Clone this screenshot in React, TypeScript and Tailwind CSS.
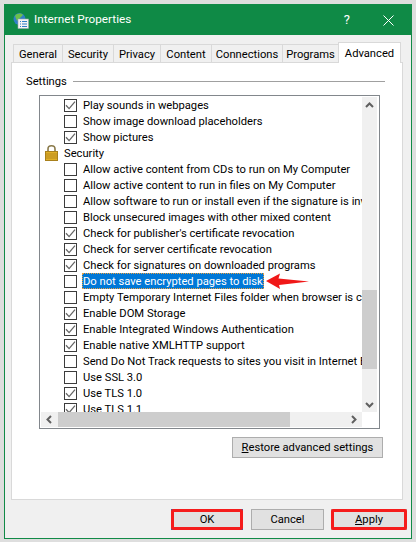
import React from 'react';

const settings = [
  { label: 'Play sounds in webpages', checked: true },
  { label: 'Show image download placeholders', checked: false },
  { label: 'Show pictures', checked: true },
  { label: 'Security', group: true },
  { label: 'Allow active content from CDs to run on My Computer', checked: false },
  { label: 'Allow active content to run in files on My Computer', checked: false },
  { label: 'Allow software to run or install even if the signature is invalid', checked: false },
  { label: 'Block unsecured images with other mixed content', checked: false },
  { label: "Check for publisher's certificate revocation", checked: true },
  { label: 'Check for server certificate revocation', checked: true },
  { label: 'Check for signatures on downloaded programs', checked: true },
  { label: 'Do not save encrypted pages to disk', checked: false, selected: true },
  { label: 'Empty Temporary Internet Files folder when browser is closed', checked: false },
  { label: 'Enable DOM Storage', checked: true },
  { label: 'Enable Integrated Windows Authentication', checked: true },
  { label: 'Enable native XMLHTTP support', checked: true },
  { label: 'Send Do Not Track requests to sites you visit in Internet Explorer', checked: false },
  { label: 'Use SSL 3.0', checked: false },
  { label: 'Use TLS 1.0', checked: true },
  { label: 'Use TLS 1.1', checked: true },
];

const tabs = [
  { label: 'General', w: 'w-[49px]' },
  { label: 'Security', w: 'w-[51px]' },
  { label: 'Privacy', w: 'w-[47px]' },
  { label: 'Content', w: 'w-[51px]' },
  { label: 'Connections', w: 'w-[71px]' },
  { label: 'Programs', w: 'w-[56px]' },
];

function Check({ checked }: { checked?: boolean }) {
  return (
    <span className="w-[13px] h-[13px] shrink-0 border border-[#3c3c3c] bg-white flex items-center justify-center">
      {checked && (
        <svg width="11" height="11" viewBox="0 0 11 11" fill="none">
          <path d="M1 5.2 L4.1 8.6 L10 1.6" stroke="#666" strokeWidth="1.3" />
        </svg>
      )}
    </span>
  );
}

function Lock() {
  return (
    <svg width="13" height="16" viewBox="0 0 13 16" className="shrink-0">
      <path d="M3 7 V4 C3 1.6 4.6 .8 6.5 .8 C8.4 .8 10 1.6 10 4 V7" fill="none" stroke="#8a7a4a" strokeWidth="1.6" />
      <rect x=".5" y="6.5" width="12" height="9" fill="#e0b028" stroke="#a8801c" />
      <path d="M1 9 H12 M1 11 H12 M1 13 H12" stroke="#b88a1e" strokeWidth="1" />
    </svg>
  );
}

function Chevron({ dir }: { dir: 'up' | 'down' | 'left' | 'right' }) {
  const d = {
    up: 'M2 7 L5.5 3.5 L9 7',
    down: 'M2 4 L5.5 7.5 L9 4',
    left: 'M7 2 L3.5 5.5 L7 9',
    right: 'M4 2 L7.5 5.5 L4 9',
  }[dir];
  return (
    <svg width="11" height="11" viewBox="0 0 11 11" fill="none">
      <path d={d} stroke="#606060" strokeWidth="2" />
    </svg>
  );
}

function Row({ item }: { item: (typeof settings)[number] }) {
  if (item.group) {
    return (
      <div className="h-4 shrink-0 flex items-center gap-[6px] pl-[4px]">
        <Lock />
        <span className="pt-[2px]">{item.label}</span>
      </div>
    );
  }
  return (
    <div className="h-4 shrink-0 flex items-center gap-[5px] pl-[23px] relative">
      <Check checked={item.checked} />
      {item.selected ? (
        <span className="h-4 flex items-center pt-[2px] border border-dotted border-[#e8a040] bg-[#0078d7] text-white">{item.label}</span>
      ) : (
        <span className="pt-[2px] border border-transparent">{item.label}</span>
      )}
      {item.selected && (
        <svg width="44" height="18" viewBox="0 0 44 18" className="absolute left-[224px] top-[-1px]">
          <path d="M1 9 L15 1.5 L13.5 6.5 L44 9.5 L14 13 L15 17 Z" fill="#f01818" />
        </svg>
      )}
    </div>
  );
}

function Button({ children, red, blue, className }: { children: React.ReactNode; red?: boolean; blue?: boolean; className: string }) {
  return (
    <button
      type="button"
      className={`h-[21px] pt-[2px] relative bg-[#e1e1e1] border ${blue ? 'border-[#0078d7]' : 'border-[#adadad]'} text-black ${className}`}
    >
      {children}
      {red && <span className="absolute -inset-px border-[3px] border-[#f51c1c] rounded-[2px]" />}
    </button>
  );
}

export default function App() {
  return (
    <div className="w-[416px] h-[542px] pt-[4px] pb-[3px] px-[4px] bg-[#dedede] text-[11.2px] text-black" style={{ fontFamily: 'Roboto, "Noto Sans", sans-serif' }}>
      <div className="h-full flex flex-col border border-[#118a47] bg-[#f0f0f0]">
        {/* Title bar */}
        <div className="h-[30px] shrink-0 bg-[#0f8a46] flex items-center text-white">
          <svg width="16" height="17" viewBox="0 0 16 17" className="ml-[8px] shrink-0">
            <circle cx="6.5" cy="7" r="6" fill="#2f7fc8" />
            <path d="M2 4 C4 1 8 1 10 3 L7 6 L4 9 Z" fill="#6cc04a" />
            <rect x="5" y="7" width="10.5" height="9.5" fill="#f4f4f4" stroke="#9aa6b0" strokeWidth=".6" />
            <path d="M7 9.5 H8 M9 9.5 H14 M7 12 H8 M9 12 H14 M7 14.5 H8 M9 14.5 H14" stroke="#2f7fc8" strokeWidth="1" />
          </svg>
          <span className="ml-[5px] text-[11.75px]">Internet Properties</span>
          <span className="ml-auto text-[13px] mr-[33px]">?</span>
          <svg width="11" height="11" viewBox="0 0 11 11" className="mr-[17px] shrink-0" fill="none">
            <path d="M.5 .5 L10.5 10.5 M10.5 .5 L.5 10.5" stroke="#fff" strokeWidth="1" />
          </svg>
        </div>

        {/* Tabs */}
        <div className="flex items-start pl-[8px] mt-[7px] h-[21px] -mb-px shrink-0 relative z-10">
          {tabs.map((t) => (
            <div key={t.label} className={`${t.w} h-[19px] mt-[2px] pt-[2px] border border-b-0 border-r-0 border-[#d9d9d9] flex items-center justify-center`}>
              {t.label}
            </div>
          ))}
          <div className="w-[63px] h-[21px] pt-[2px] border border-b-0 border-[#d9d9d9] bg-white flex items-center justify-center">Advanced</div>
        </div>

        {/* Panel */}
        <div className="h-[438px] shrink-0 ml-[6px] mr-[8px] border border-[#d9d9d9] bg-white pt-[11px] pl-[14px] pr-[17px] flex flex-col">
          <div className="flex items-center gap-[6px] h-[14px]">
            <span className="pt-[2px]">Settings</span>
            <div className="flex-1 h-px bg-[#a0a0a0]" />
          </div>

          {/* List box */}
          <div className="mt-[7px] ml-[13px] mr-[5px] h-[334px] border border-[#82878c] p-px pt-px pr-[2px] flex flex-col bg-white">
            <div className="flex h-[315px] shrink-0">
              <div className="flex-1 min-w-0 overflow-hidden flex flex-col whitespace-nowrap">
                {settings.map((s) => (
                  <Row key={s.label} item={s} />
                ))}
              </div>
              <div className="w-[15px] shrink-0 bg-[#f0f0f0] flex flex-col">
                <div className="h-[16px] flex items-center justify-center"><Chevron dir="up" /></div>
                <div className="h-[177px]" />
                <div className="h-[79px] bg-[#cdcdcd]" />
                <div className="flex-1" />
                <div className="h-[16px] flex items-center justify-center"><Chevron dir="down" /></div>
              </div>
            </div>
            <div className="h-[15px] w-[321px] shrink-0 bg-[#f0f0f0] flex">
              <div className="w-[17px] flex items-center justify-center"><Chevron dir="left" /></div>
              <div className="w-[232px] bg-[#cdcdcd]" />
              <div className="flex-1" />
              <div className="w-[17px] flex items-center justify-center"><Chevron dir="right" /></div>
            </div>
          </div>

          <div className="flex justify-end mt-[8px] mr-[2px]">
            <button type="button" className="w-[151px] h-[21px] pt-[2px] bg-[#e1e1e1] border border-[#adadad]">
              <span className="underline">R</span>estore advanced settings
            </button>
          </div>
        </div>

        {/* Footer */}
        <div className="flex justify-end pt-[9px] pr-[4px]">
          <Button red blue className="w-[72px] mr-[8px]">OK</Button>
          <Button className="w-[73px] mr-[7px]">Cancel</Button>
          <Button red className="w-[76px]"><span className="underline">A</span>pply</Button>
        </div>
      </div>
    </div>
  );
}
